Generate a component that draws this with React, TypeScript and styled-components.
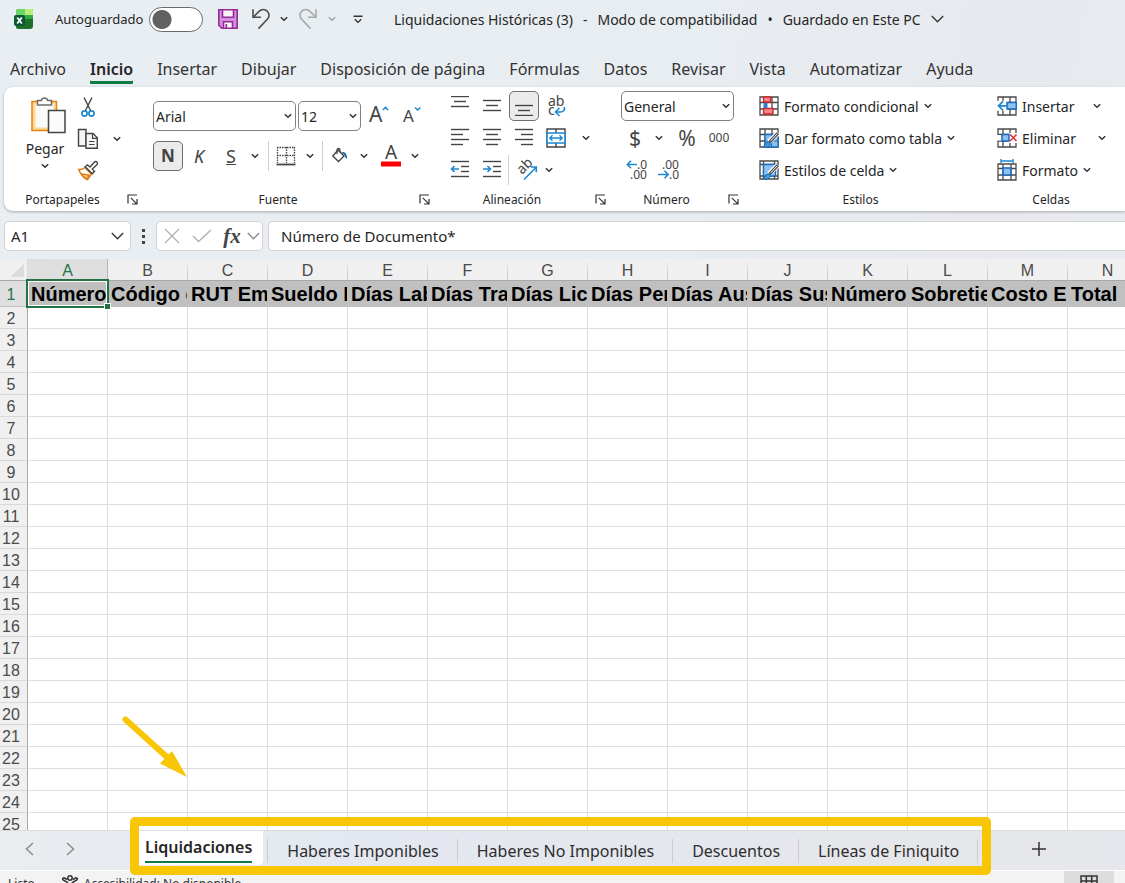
import React from 'react';
import styled, { createGlobalStyle, css } from 'styled-components';

const UI_FONT = '"Noto Sans", "Open Sans", sans-serif';
const CELL_FONT = '"Liberation Sans", Arial, sans-serif';
const INK = '#262626';
const LINE = '#444444';
const BLUE = '#1e88d2';
const GREEN = '#107c41';
const YELLOW = '#f9c606';

const GlobalStyle = createGlobalStyle`
  *, *::before, *::after { box-sizing: border-box; }
  body { margin: 0; font-family: ${UI_FONT}; color: ${INK}; }
  button, input, select { font: inherit; color: inherit; margin: 0; }
  svg { display: block; flex: none; }
`;

/* ---------- shell ---------- */

const Window = styled.div`
  display: flex;
  flex-direction: column;
  height: 100vh;
  overflow: hidden;
  background: linear-gradient(100deg, #e8eef2 0%, #e8edf1 55%, #e7e9ee 80%, #e8ecf1 100%);
`;

const PlainButton = styled.button`
  display: inline-flex;
  align-items: center;
  justify-content: center;
  flex: none;
  padding: 0;
  border: 0;
  background: none;
  white-space: nowrap;
`;

/* ---------- title bar ---------- */

const TitleBar = styled.header`
  display: flex;
  align-items: center;
  flex: none;
  height: 38px;
  padding-left: 13px;
  white-space: nowrap;
`;

const AutoSave = styled.label`
  display: flex;
  align-items: center;
  justify-content: space-between;
  gap: 6px;
  width: 148px;
  margin: 0 11px 0 21px;
  font-size: 13px;
`;

const Switch = styled.input`
  appearance: none;
  flex: none;
  width: 54px;
  height: 25px;
  border: 1px solid #6a6a6a;
  border-radius: 13px;
  background: radial-gradient(circle at 12px 50%, #616161 9px, #ffffff 10px);
`;

const QuickButton = styled(PlainButton)<{ $w: number }>`
  width: ${p => p.$w}px;
  height: 28px;
`;

const DocumentTitle = styled.button`
  display: flex;
  align-items: center;
  gap: 10px;
  margin-left: 14px;
  padding: 0;
  border: 0;
  background: none;
  font-size: 14px;
`;

/* ---------- ribbon tabs ---------- */

const RibbonTabs = styled.nav`
  display: flex;
  flex: none;
  gap: 24px;
  height: 49px;
  padding: 17px 10px 0;
  font-size: 16px;
  line-height: 28px;
`;

const RibbonTab = styled.a<{ $active?: boolean }>`
  height: 29px;
  color: #333333;
  text-decoration: none;
  white-space: nowrap;
  ${p => p.$active && css`
    border-radius: 1px;
    box-shadow: 0 -3px 0 ${GREEN} inset;
    color: ${INK};
    font-weight: 600;
  `}
`;

/* ---------- ribbon ---------- */

const Ribbon = styled.section`
  display: flex;
  flex: none;
  height: 124px;
  margin-left: 4px;
  border-radius: 9px 0 0 9px;
  background: #ffffff;
  box-shadow: 0 1px 3px rgba(0, 0, 0, 0.28);
`;

const Group = styled.div<{ $w?: number }>`
  position: relative;
  display: flex;
  flex-direction: column;
  flex: ${p => (p.$w ? `0 0 ${p.$w}px` : '1 0 0')};
  padding-top: 3px;
  & + &::before {
    content: '';
    position: absolute;
    left: -1px;
    top: 6px;
    bottom: 7px;
    width: 1px;
    background: #cfcfcf;
  }
`;

const GroupBody = styled.div<{ $pad: number; $top?: number; $gap?: number }>`
  display: flex;
  flex-direction: column;
  flex: none;
  height: 97px;
  gap: ${p => p.$gap ?? 0}px;
  padding: ${p => p.$top ?? 0}px 0 0 ${p => p.$pad}px;
`;

const GroupFooter = styled.div`
  display: flex;
  align-items: center;
  height: 24px;
  padding-right: 5px;
  font-size: 12px;
  span { flex: 1; text-align: center; }
`;

const Launcher = styled(PlainButton)`
  width: 17px;
  height: 18px;
  padding-left: 6px;
`;

const Row = styled.div<{ $h?: number; $gap?: number }>`
  display: flex;
  align-items: center;
  flex: none;
  gap: ${p => p.$gap ?? 0}px;
  height: ${p => p.$h ?? 32}px;
`;

const Tool = styled(PlainButton)<{ $w?: number; $on?: boolean; $size?: number }>`
  width: ${p => p.$w ?? 32}px;
  height: 30px;
  font-size: ${p => p.$size ?? 18}px;
  line-height: 28px;
  color: ${LINE};
  ${p => p.$on && css`
    width: 30px;
    border: 1px solid #6f6f6f;
    border-radius: 5px;
    background: #ebebeb;
  `}
`;

const ToggleSlot = styled.div`
  display: flex;
  justify-content: center;
  width: 32px;
`;

const ToolDivider = styled.div<{ $gap?: number }>`
  flex: none;
  width: 1px;
  height: 30px;
  margin-left: ${p => p.$gap ?? 0}px;
  background: #cfcfcf;
`;

const Clipboard = styled.div`
  display: flex;
  height: 97px;
  padding: 1px 0 0 16px;
`;

const PasteButton = styled(PlainButton)`
  flex-direction: column;
  justify-content: flex-start;
  gap: 3px;
  width: 50px;
  padding-top: 4px;
  font-size: 14px;
  line-height: 22px;
  svg:first-child { margin-left: 5px; }
`;

const ClipboardTools = styled.div`
  display: grid;
  grid-template-columns: 36px 22px;
  grid-auto-rows: 32px;
  place-items: center;
`;

const SelectBox = styled.div<{ $w: number }>`
  position: relative;
  flex: none;
  width: ${p => p.$w}px;
  height: 30px;
  select {
    appearance: none;
    width: 100%;
    height: 100%;
    padding: 0 0 0 2px;
    border: 1px solid #808080;
    border-radius: 5px;
    background: #ffffff;
    font-size: 14px;
  }
  svg {
    position: absolute;
    right: 4px;
    top: 12px;
    pointer-events: none;
  }
`;

const CommandButton = styled(PlainButton)<{ $w?: number }>`
  justify-content: flex-start;
  gap: 5px;
  height: 32px;
  min-width: ${p => p.$w ?? 0}px;
  font-size: 14px;
`;

const Push = styled.span`
  margin-left: auto;
`;

/* ---------- formula bar ---------- */

const FormulaRow = styled.div`
  display: flex;
  align-items: center;
  flex: none;
  height: 48px;
  padding: 2px 0 0 4px;
`;

const Field = styled.div<{ $w?: number }>`
  display: flex;
  align-items: center;
  flex: ${p => (p.$w ? `0 0 ${p.$w}px` : '1 1 0')};
  min-width: 0;
  height: 30px;
  border: 1px solid #d2d2d2;
  border-radius: 5px;
  background: #ffffff;
  font-size: 15px;
  input {
    flex: 1;
    min-width: 0;
    padding: 0;
    border: 0;
    outline: 0;
    background: none;
  }
`;

const NameField = styled(Field)`
  padding: 0 6px;
`;

const FormulaField = styled(Field)`
  margin-left: 5px;
  padding-left: 12px;
  border-right: 0;
  border-radius: 5px 0 0 5px;
`;

const Grip = styled.div`
  display: grid;
  gap: 3px;
  width: 25px;
  justify-content: center;
  i { width: 3px; height: 3px; background: #444444; }
`;

const FunctionMark = styled.span`
  font: italic bold 21px/26px "Liberation Serif", serif;
  color: #444444;
`;

/* ---------- sheet ---------- */

const SheetArea = styled.main`
  position: relative;
  flex: 1 1 0;
  min-height: 0;
  overflow: hidden;
  background: #ffffff;
`;

const Sheet = styled.table`
  table-layout: fixed;
  width: 1148px;
  border-collapse: separate;
  border-spacing: 0;
  font-family: ${CELL_FONT};
`;

const Corner = styled.td`
  width: 28px;
  height: 22px;
  padding: 0;
  border-right: 1px solid #dadada;
  border-bottom: 1px solid #a8a8a8;
  background: linear-gradient(135deg, transparent 50%, #dcdcdc 50%) 10px 4px / 14px 14px no-repeat #f0f0f0;
`;

const ColumnHead = styled.th<{ $active?: boolean }>`
  width: 80px;
  height: 22px;
  padding: 2px 1px 0 0;
  border-bottom: 1px solid #a8a8a8;
  background: ${p => p.$active
    ? 'linear-gradient(#b5b5b5, #b5b5b5) right / 1px 100% no-repeat #dfdfdf'
    : 'linear-gradient(#f0f0f0, #c6c6c6) right / 1px 100% no-repeat #f0f0f0'};
  color: ${p => (p.$active ? '#217346' : '#4a4a4a')};
  font-size: 16px;
  font-weight: 400;
  line-height: 19px;
`;

const RowHead = styled.th<{ $active?: boolean }>`
  height: ${p => (p.$active ? 26 : 22)}px;
  padding: 2px 5px 0 0;
  border-right: 1px solid #a8a8a8;
  border-bottom: 1px solid ${p => (p.$active ? '#c0c0c0' : '#d9d9d9')};
  background: ${p => (p.$active ? '#dfdfdf' : '#f0f0f0')};
  color: ${p => (p.$active ? '#217346' : '#4a4a4a')};
  font-size: 16px;
  font-weight: 400;
  line-height: 19px;
  text-align: center;
`;

const Cell = styled.td`
  height: 22px;
  padding: 0;
  border-right: 1px solid #dedede;
  border-bottom: 1px solid #dedede;
`;

const TitleCell = styled.td<{ $selected?: boolean }>`
  position: relative;
  height: 26px;
  padding: 0 1px 0 3px;
  background: #c0c0c0;
  color: #000000;
  font-size: 20px;
  font-weight: 700;
  line-height: 26px;
  white-space: nowrap;
  span { display: block; overflow: hidden; }
  ${p => p.$selected && css`
    z-index: 1;
    &::before {
      content: '';
      position: absolute;
      inset: -2px -1px -1px -2px;
      border: 2px solid #217346;
      box-shadow: inset 0 0 0 1px #ffffff;
    }
    &::after {
      content: '';
      position: absolute;
      right: -3px;
      bottom: -3px;
      width: 7px;
      height: 7px;
      border: 1px solid #ffffff;
      background: #217346;
    }
  `}
`;

const Arrow = styled.svg`
  position: absolute;
  left: 120px;
  bottom: 50px;
`;

/* ---------- sheet tabs and status ---------- */

const TabStrip = styled.nav`
  position: relative;
  z-index: 2;
  display: flex;
  align-items: center;
  flex: none;
  height: 40px;
  border-top: 1px solid #dcdcdc;
  background: linear-gradient(90deg, #e9edf0 0%, #e4e8f0 30%, #e4e7ee 60%, #e6e7ea 80%, #e5e7ec 100%);
`;

const TabArrows = styled.div`
  display: flex;
  width: 139px;
  padding: 0 0 3px 22px;
  gap: 24px;
`;

const TabList = styled.div`
  position: relative;
  display: flex;
  height: 39px;
  padding-right: 4px;
  &::after {
    content: '';
    position: absolute;
    inset: -14px -9px -5px -9px;
    border: 9px solid ${YELLOW};
    border-radius: 5px;
    pointer-events: none;
  }
`;

const SheetTab = styled.a<{ $active?: boolean }>`
  position: relative;
  padding: 6px 19px 0;
  color: #2e2e2e;
  font-size: 16px;
  line-height: 28px;
  text-decoration: none;
  white-space: nowrap;
  &::after {
    content: '';
    position: absolute;
    right: ${p => (p.$active ? -5 : 0)}px;
    top: 8px;
    width: 1px;
    height: 24px;
    background: #cccccc;
  }
  ${p => p.$active && css`
    height: 34px;
    margin-right: 5px;
    padding: 2px 11px 0 6px;
    border-radius: 0 0 5px 0;
    background: #ffffff;
    color: ${INK};
    font-weight: 600;
    span { display: block; border-bottom: 2px solid ${GREEN}; }
  `}
`;

const AddSheet = styled(PlainButton)`
  width: 30px;
  height: 30px;
  margin: 0 0 4px 42px;
`;

const StatusBar = styled.footer`
  display: flex;
  align-items: flex-start;
  flex: none;
  height: 13px;
  padding: 4px 11px 0 8px;
  overflow: hidden;
  border-top: 1px solid #ffffff;
  background: #f3f3f3;
  color: #333333;
  font-size: 12px;
  line-height: 17px;
  svg { margin: 0 5px 0 26px; }
`;

const ViewButton = styled(PlainButton)`
  align-items: flex-start;
  width: 50px;
  height: 24px;
  margin: -4px 0 0 auto;
  padding-top: 4px;
  background: #dddddd;
  svg { margin: 0; }
`;

/* ---------- icons ---------- */

const Chevron = ({ color = '#333333' }: { color?: string }) => (
  <svg width="8" height="6" viewBox="0 0 8 6" fill="none" stroke={color} strokeWidth="1.5">
    <path d="M0.8 1.2 4 4.3 7.2 1.2" />
  </svg>
);

const WideChevron = ({ color = '#333333' }: { color?: string }) => (
  <svg width="13" height="8" viewBox="0 0 13 8" fill="none" stroke={color} strokeWidth="1.3">
    <path d="M0.8 1 6.5 6.8 12.2 1" />
  </svg>
);

const ExcelLogo = () => (
  <svg width="21" height="22" viewBox="0 0 21 22">
    <path d="M3 4a3 3 0 0 1 3-3h13a1 1 0 0 1 1 1v16a3 3 0 0 1-3 3H5a2 2 0 0 1-2-2z" fill="#1f6f2c" />
    <path d="M3 4a3 3 0 0 1 3-3h6v6H3z" fill="#6bd667" />
    <path d="M12 1h7a1 1 0 0 1 1 1v5h-8z" fill="#b9ec78" />
    <path d="M12 7h8v4h-8z" fill="#33a93f" />
    <path d="M3 7h9v6H3z" fill="#48bd50" />
    <rect x="1" y="7" width="11" height="11" rx="2" fill="#0c5a35" />
    <path d="m4.2 9.5 4.6 6M8.8 9.5l-4.6 6" stroke="#fff" strokeWidth="1.8" />
  </svg>
);

const SaveIcon = () => (
  <svg width="22" height="22" viewBox="0 0 22 22" stroke="#952b9c" strokeWidth="1.6">
    <path d="M1.8 1.8h18.4v18.4H4.8l-3-3z" fill="#d590dc" />
    <path d="M5.5 1.8h11v7.5h-11z" fill="#f8f3f9" />
    <path d="M6.5 20.2v-6.5h9v6.5z" fill="#f8f3f9" />
    <path d="M9.3 16v4" />
  </svg>
);

const UndoIcon = ({ flip = false }: { flip?: boolean }) => (
  <svg width="20" height="22" viewBox="0 0 20 22" fill="none" stroke={flip ? '#a5a9ac' : '#4d4d4d'} strokeWidth="1.6">
    <path
      transform={flip ? 'matrix(-1 0 0 1 20 0)' : undefined}
      d="M2 1.3v7.9h8M2.3 9 8 3.4c2.5-2.4 6-2.4 8.3-.2 2.3 2.3 2.3 5.8 0 8.100L7.5 20.6"
    />
  </svg>
);

const CustomizeIcon = () => (
  <svg width="10" height="9" viewBox="0 0 10 9" fill="none" stroke="#333" strokeWidth="1.4">
    <path d="M0.5 1.2h9M1.800 4.300 5 7.400l3.200-3.100" />
  </svg>
);

const LauncherIcon = () => (
  <svg width="11" height="11" viewBox="0 0 11 11" fill="none" stroke="#333" strokeWidth="1.200">
    <path d="M1 9.500V1h9M3.800 3.800l6 6M10 5v5H5" />
  </svg>
);

const PasteIcon = () => (
  <svg width="38" height="40" viewBox="0 0 38 40">
    <path d="M3 6.500h24.500V35.500H3z" fill="#fdd992" stroke="#e8811a" strokeWidth="1.500" />
    <path d="M6.500 9h18v23.500h-18z" fill="#fafafa" />
    <path d="M8.500 10V5.500h3.800a3.300 3.300 0 0 1 6.400 0h3.800V10z" fill="#fff" stroke="#6c6c6c" strokeWidth="1.500" />
    <path d="M19.500 15.500H36v22H19.500z" fill="#fafafa" stroke="#444" strokeWidth="1.500" />
  </svg>
);

const CutIcon = () => (
  <svg width="20" height="22" viewBox="0 0 20 22" fill="none" strokeWidth="1.400">
    <path d="M6 1.500l6.800 13.500M14 1.500 7.200 15" stroke="#444" />
    <circle cx="6.500" cy="17.500" r="2.600" stroke={BLUE} strokeWidth="1.700" />
    <circle cx="13.500" cy="17.500" r="2.600" stroke={BLUE} strokeWidth="1.700" />
  </svg>
);

const CopyIcon = () => (
  <svg width="22" height="22" viewBox="0 0 22 22" fill="#f6f6f6" stroke="#444" strokeWidth="1.400">
    <path d="M1.500 1.500h7.500V18H1.500z" />
    <path d="M9 5.500h7l4.300 4.300V20.300H9z" />
    <path d="M15.500 5.500v4.800h4.800M12 13.500h5.500M12 16.500h5.500" fill="none" strokeWidth="1.200" />
  </svg>
);

const PainterIcon = () => (
  <svg width="22" height="22" viewBox="0 0 22 22">
    <path d="M1.800 9.500c2.400.3 4.400-.4 6-2l6.600 6.600L10.500 19.500C6.500 18 3.500 14.500 1.800 9.500z" fill="#fff" stroke="#e07b16" strokeWidth="1.500" />
    <path d="m4.500 14 7.500 1-2 4c-2.300-1.300-4-2.800-5.500-5z" fill="#fbd08b" stroke="#e07b16" strokeWidth="1.300" />
    <path d="m8.200 6.700 2.300-1.900 2.500 2.200 4.300-4.800a1.800 1.800 0 0 1 2.600 2.600L15.300 9l2.200 2.500-2.300 2.200z" fill="#fff" stroke="#444" strokeWidth="1.400" />
  </svg>
);

const FontSizeIcon = ({ down = false }: { down?: boolean }) => (
  <svg width="22" height="24" viewBox="0 0 22 24">
    <text x={down ? 2 : 1} y="18" fontFamily="Noto Sans" fontSize={down ? 17 : 21} fill={LINE}>A</text>
    <path d={down ? 'm14 3.500 2.700 2.500 2.700-2.500' : 'm14.800 6 2.700-2.600 2.700 2.600'} fill="none" stroke={BLUE} strokeWidth="1.600" />
  </svg>
);

const BorderIcon = () => (
  <svg width="20" height="20" viewBox="0 0 20 20" fill="none" stroke="#444">
    <path d="M1 1.500h18M1 9.500h18M1.500 1v16M10.500 1v16M18.500 1v16" strokeWidth="1.300" strokeDasharray="1.500 1" />
    <path d="M0.500 18.500h19" strokeWidth="1.800" />
  </svg>
);

const BucketIcon = () => (
  <svg width="18" height="18" viewBox="0 0 18 18">
    <path d="m7 3 6 6-5.500 5.500L1.800 9z" fill="#fff" stroke="#444" strokeWidth="1.400" />
    <path d="M6 7V3.300C6 .9 9 .9 9 3.300v2" fill="none" stroke="#444" strokeWidth="1.300" />
    <path d="M10.500 5c4-.5 5.500 1.500 5.500 7-1.500-1-2-2-2.500-4z" fill="#1769b0" />
  </svg>
);

const FontColorIcon = () => (
  <svg width="20" height="22" viewBox="0 0 20 22">
    <text x="4" y="14" fontFamily="Noto Sans" fontSize="19" fill={LINE}>A</text>
    <path d="M0 16.500h20v5H0z" fill="#fe0000" />
  </svg>
);

const LinesIcon = ({ lines, children }: { lines: number[][]; children?: React.ReactNode }) => (
  <svg width="20" height="20" viewBox="0 0 20 20" fill="none" stroke={LINE} strokeWidth="1.400">
    {lines.map(([x1, x2, y]) => <path key={y} d={`M${x1} ${y}.500H${x2}`} />)}
    {children}
  </svg>
);

const WrapIcon = () => (
  <svg width="20" height="22" viewBox="0 0 20 22">
    <text x="2" y="11" fontFamily="Noto Sans" fontSize="14" fill={LINE}>ab</text>
    <text x="2" y="20" fontFamily="Noto Sans" fontSize="14" fill={LINE}>c</text>
    <path d="M18.500 12c.5 3.500-1.500 5-4 5H10.500M13.500 13l-4 4 4 4" fill="none" stroke={BLUE} strokeWidth="1.600" />
  </svg>
);

const MergeIcon = () => (
  <svg width="20" height="20" viewBox="0 0 20 20" fill="none">
    <path d="M1 1h18v18H1zM10 1v18" stroke="#444" strokeWidth="1.400" />
    <path d="M1 5h18v10H1z" fill="#fff" stroke={BLUE} strokeWidth="1.600" />
    <path d="M4 10h12M6.500 7.300 3.800 10l2.700 2.700M13.500 7.300l2.700 2.700-2.700 2.700" stroke={BLUE} strokeWidth="1.400" />
  </svg>
);

const OrientationIcon = () => (
  <svg width="22" height="22" viewBox="0 0 22 22">
    <text x="6" y="16" fontFamily="Noto Sans" fontSize="14" fill={LINE} transform="rotate(-45 6 16)">ab</text>
    <path d="M8 20.500 20 8.500M15 8h5.300v5.300" fill="none" stroke={BLUE} strokeWidth="1.600" />
  </svg>
);

const DecimalIcon = ({ less = false }: { less?: boolean }) => (
  <svg width="22" height="22" viewBox="0 0 22 22">
    <text x={less ? 4 : 11} y="10" fontFamily="Noto Sans" fontSize="12" fill={LINE}>{less ? '.00' : '.0'}</text>
    <text x={less ? 11 : 4} y="20" fontFamily="Noto Sans" fontSize="12" fill={LINE}>{less ? '.0' : '.00'}</text>
    <path
      d={less ? 'M0 15.500h10M6.500 11.800l3.700 3.700-3.700 3.700' : 'M11 5.500H1.500M5 1.800 1.300 5.500 5 9.200'}
      fill="none" stroke={BLUE} strokeWidth="1.600"
    />
  </svg>
);

const GridBase = () => (
  <path d="M1 1h18v18H1zM1 6.500h18M1 13h18M6 1v18M13 1v18" fill="#fff" stroke="#4a4a4a" strokeWidth="1.300" />
);

const ConditionalIcon = () => (
  <svg width="20" height="20" viewBox="0 0 20 20">
    <GridBase />
    <path d="M4.500 1h7v5h-7zM4.500 12.500H14V18H4.500z" fill="#f58a8e" stroke="#d8242b" strokeWidth="1.400" />
    <path d="M4.500 7h4v5h-4z" fill="#2b7cd0" />
  </svg>
);

const BrushOverlay = () => (
  <>
    <path d="M19 5 10 14" stroke="#fff" strokeWidth="5" />
    <path d="m18.800 5.200-8.300 9" stroke="#444" strokeWidth="3" />
    <path d="m18.300 5.700-7 7.600" stroke="#fff" strokeWidth="1" />
    <path d="M4 18.500c2.500-.3 2-4.800 5.500-4.500 2.500.5 2 3 .5 4.200-1.500 1.200-4 1.300-6 .3z" fill="#3f9ae0" stroke="#1769b0" />
  </>
);

const TableStyleIcon = () => (
  <svg width="20" height="20" viewBox="0 0 20 20">
    <GridBase />
    <path d="M6 6.500h13V19H6z" fill="#8cc2f0" stroke="#1b6fbe" strokeWidth="1.400" />
    <path d="M6 13h13M12.500 6.500V19" stroke="#1b6fbe" strokeWidth="1.200" />
    <BrushOverlay />
  </svg>
);

const CellStyleIcon = () => (
  <svg width="20" height="20" viewBox="0 0 20 20">
    <path d="M1 1h18v18H1zM1 4.500h18M4.500 1v18M15.500 1v18M1 16h18" fill="#fff" stroke="#4a4a4a" strokeWidth="1.300" />
    <path d="M4.500 4.500h12V16h-12z" fill="#8cc2f0" stroke="#1b6fbe" strokeWidth="1.400" />
    <BrushOverlay />
  </svg>
);

const InsertCellsIcon = () => (
  <svg width="20" height="20" viewBox="0 0 20 20">
    <GridBase />
    <path d="M0 4.800h11v10H0z" fill="#fff" />
    <path d="M10 6.500h9.300V13H10z" fill="#8cc2f0" stroke="#1b6fbe" strokeWidth="1.500" />
    <path d="M10 9.800H1.500M6 5.300 1.500 9.800 6 14.300" fill="none" stroke={BLUE} strokeWidth="1.700" />
  </svg>
);

const DeleteCellsIcon = () => (
  <svg width="20" height="20" viewBox="0 0 20 20">
    <GridBase />
    <path d="M0 7h5v5.500H0zM12 5h8v10h-8z" fill="#fff" />
    <path d="M5 6.500h7V13H5z" fill="#8cc2f0" stroke="#1b6fbe" strokeWidth="1.500" />
    <path d="m13 6.500 6.500 6.500M19.500 6.500 13 13" stroke="#e0343a" strokeWidth="1.600" />
  </svg>
);

const FormatCellsIcon = () => (
  <svg width="20" height="22" viewBox="0 0 20 22">
    <path d="M1 5h18v16H1zM1 9.500h18M1 16h18M6 5v16M14 5v16" fill="#fff" stroke="#4a4a4a" strokeWidth="1.300" />
    <path d="M6 9h8v7H6z" fill="#8cc2f0" stroke="#1b6fbe" strokeWidth="1.500" />
    <path d="M4 2h12M4 0v4.300M16 0v4.300" stroke={BLUE} strokeWidth="1.400" />
  </svg>
);

const AccessibilityIcon = () => (
  <svg width="18" height="20" viewBox="0 0 18 20" fill="none" stroke="#333" strokeWidth="1.500">
    <circle cx="9" cy="3" r="2.200" />
    <path d="M6 4.500 3.500 3C1.500 2.300 1 4.500 2.500 5.200L6.500 7.500v4L4.500 17M12 4.500 14.500 3c2-.7 2.500 1.500 1 2.200l-4 2.300v4l2 5.500" />
  </svg>
);

const GridViewIcon = () => (
  <svg width="18" height="18" viewBox="0 0 18 18" fill="none" stroke="#333" strokeWidth="1.500">
    <path d="M1 1h16v16H1zM1 6h16M1 11h16M6.300 1v16M11.700 1v16" />
  </svg>
);

/* ---------- data ---------- */

const ribbonTabs = [
  'Archivo', 'Inicio', 'Insertar', 'Dibujar', 'Disposición de página', 'Fórmulas',
  'Datos', 'Revisar', 'Vista', 'Automatizar', 'Ayuda',
];

const columns: [string, string][] = [
  ['A', 'Número'], ['B', 'Código de'], ['C', 'RUT Em'], ['D', 'Sueldo B'], ['E', 'Días Lab'],
  ['F', 'Días Tra'], ['G', 'Días Lic'], ['H', 'Días Per'], ['I', 'Días Aus'], ['J', 'Días Sus'],
  ['K', 'Número'], ['L', 'Sobretie'], ['M', 'Costo E'], ['N', 'Total'],
];

const rowNumbers = Array.from({ length: 24 }, (_, i) => i + 2);

const sheetTabs = ['Liquidaciones', 'Haberes Imponibles', 'Haberes No Imponibles', 'Descuentos', 'Líneas de Finiquito'];

/* ---------- parts ---------- */

const Footer = ({ label, launcher = true }: { label: string; launcher?: boolean }) => (
  <GroupFooter>
    <span>{label}</span>
    {launcher && <Launcher aria-label={`Opciones de ${label}`}><LauncherIcon /></Launcher>}
  </GroupFooter>
);

const Picker = ({ w, value, label }: { w: number; value: string; label: string }) => (
  <SelectBox $w={w}>
    <select aria-label={label} defaultValue={value}><option>{value}</option></select>
    <Chevron />
  </SelectBox>
);

const More = ({ w, label }: { w: number; label: string }) => (
  <Tool $w={w} aria-label={label}><Chevron /></Tool>
);

export default function App() {
  return (
    <>
      <GlobalStyle />
      <Window>
        <TitleBar>
          <ExcelLogo />
          <AutoSave>
            Autoguardado
            <Switch type="checkbox" role="switch" />
          </AutoSave>
          <QuickButton $w={28} aria-label="Guardar"><SaveIcon /></QuickButton>
          <QuickButton $w={38} aria-label="Deshacer"><UndoIcon /></QuickButton>
          <QuickButton $w={8} aria-label="Más deshacer"><Chevron /></QuickButton>
          <QuickButton $w={40} aria-label="Rehacer"><UndoIcon flip /></QuickButton>
          <QuickButton $w={8} aria-label="Más rehacer"><Chevron color="#a0a4a7" /></QuickButton>
          <QuickButton $w={44} aria-label="Personalizar"><CustomizeIcon /></QuickButton>
          <DocumentTitle>
            <span>Liquidaciones Históricas (3)</span>
            <span>-</span>
            <span>Modo de compatibilidad</span>
            <span>•</span>
            <span>Guardado en Este PC</span>
            <WideChevron />
          </DocumentTitle>
        </TitleBar>

        <RibbonTabs>
          {ribbonTabs.map(tab => (
            <RibbonTab key={tab} href="#" $active={tab === 'Inicio'}>{tab}</RibbonTab>
          ))}
        </RibbonTabs>

        <Ribbon>
          <Group $w={139}>
            <Clipboard>
              <PasteButton>
                <PasteIcon />
                <span>Pegar</span>
                <Chevron />
              </PasteButton>
              <ClipboardTools>
                <Tool aria-label="Cortar"><CutIcon /></Tool>
                <span />
                <Tool aria-label="Copiar"><CopyIcon /></Tool>
                <More w={16} label="Más copiar" />
                <Tool aria-label="Copiar formato"><PainterIcon /></Tool>
              </ClipboardTools>
            </Clipboard>
            <Footer label="Portapapeles" />
          </Group>

          <Group $w={292}>
            <GroupBody $pad={10} $top={11} $gap={10}>
              <Row $h={30} $gap={2}>
                <Picker w={143} value="Arial" label="Fuente" />
                <Picker w={63} value="12" label="Tamaño" />
                <Tool $w={32} aria-label="Aumentar tamaño"><FontSizeIcon /></Tool>
                <Tool $w={30} aria-label="Reducir tamaño"><FontSizeIcon down /></Tool>
              </Row>
              <Row $h={30}>
                <Tool $on $size={17}><b>N</b></Tool>
                <Tool><i>K</i></Tool>
                <Tool><u>S</u></Tool>
                <More w={16} label="Más subrayado" />
                <ToolDivider $gap={5} />
                <Tool $w={34} aria-label="Bordes"><BorderIcon /></Tool>
                <More w={14} label="Más bordes" />
                <ToolDivider $gap={5} />
                <Tool $w={34} aria-label="Color de relleno"><BucketIcon /></Tool>
                <More w={14} label="Más relleno" />
                <Tool $w={40} aria-label="Color de fuente"><FontColorIcon /></Tool>
                <More w={8} label="Más color" />
              </Row>
            </GroupBody>
            <Footer label="Fuente" />
          </Group>

          <Group $w={176}>
            <GroupBody $pad={9}>
              <Row>
                <Tool aria-label="Alinear arriba"><LinesIcon lines={[[1, 19, 0], [4, 16, 5], [1, 19, 10]]} /></Tool>
                <Tool aria-label="Alinear en medio"><LinesIcon lines={[[1, 19, 4], [4, 16, 9], [1, 19, 14]]} /></Tool>
                <ToggleSlot>
                  <Tool $on aria-label="Alinear abajo"><LinesIcon lines={[[1, 19, 9], [4, 16, 14], [1, 19, 19]]} /></Tool>
                </ToggleSlot>
                <Tool aria-label="Ajustar texto"><WrapIcon /></Tool>
              </Row>
              <Row>
                <Tool aria-label="Izquierda"><LinesIcon lines={[[1, 19, 1], [1, 13, 6], [1, 19, 11], [1, 13, 16]]} /></Tool>
                <Tool aria-label="Centrar"><LinesIcon lines={[[1, 19, 1], [4, 16, 6], [1, 19, 11], [4, 16, 16]]} /></Tool>
                <Tool aria-label="Derecha"><LinesIcon lines={[[1, 19, 1], [7, 19, 6], [1, 19, 11], [7, 19, 16]]} /></Tool>
                <Tool aria-label="Combinar"><MergeIcon /></Tool>
                <More w={28} label="Más combinar" />
              </Row>
              <Row>
                <Tool aria-label="Disminuir sangría">
                  <LinesIcon lines={[[1, 19, 1], [11, 19, 6], [11, 19, 11], [1, 19, 16]]}>
                    <path d="M9 9H1.500M4.500 6l-3 3 3 3" stroke={BLUE} strokeWidth="1.600" />
                  </LinesIcon>
                </Tool>
                <Tool aria-label="Aumentar sangría">
                  <LinesIcon lines={[[1, 19, 1], [11, 19, 6], [11, 19, 11], [1, 19, 16]]}>
                    <path d="M1 9h7.500M5.500 6l3 3-3 3" stroke={BLUE} strokeWidth="1.600" />
                  </LinesIcon>
                </Tool>
                <ToolDivider />
                <Tool $w={36} aria-label="Orientación"><OrientationIcon /></Tool>
                <More w={8} label="Más orientación" />
              </Row>
            </GroupBody>
            <Footer label="Alineación" />
          </Group>

          <Group $w={133}>
            <GroupBody $pad={10}>
              <Row><Picker w={113} value="General" label="Formato de número" /></Row>
              <Row>
                <Tool $w={28} $size={21}>$</Tool>
                <More w={20} label="Más moneda" />
                <Tool $w={36} $size={21}>%</Tool>
                <Tool $w={28} $size={12}>000</Tool>
              </Row>
              <Row>
                <Tool aria-label="Aumentar decimales"><DecimalIcon /></Tool>
                <Tool aria-label="Disminuir decimales"><DecimalIcon less /></Tool>
              </Row>
            </GroupBody>
            <Footer label="Número" />
          </Group>

          <Group $w={238}>
            <GroupBody $pad={15}>
              <CommandButton><ConditionalIcon />Formato condicional<Chevron /></CommandButton>
              <CommandButton><TableStyleIcon />Dar formato como tabla<Chevron /></CommandButton>
              <CommandButton><CellStyleIcon />Estilos de celda<Chevron /></CommandButton>
            </GroupBody>
            <Footer label="Estilos" launcher={false} />
          </Group>

          <Group>
            <GroupBody $pad={15}>
              <Row><CommandButton $w={104}><InsertCellsIcon />Insertar<Push><Chevron /></Push></CommandButton></Row>
              <Row><CommandButton $w={109}><DeleteCellsIcon />Eliminar<Push><Chevron /></Push></CommandButton></Row>
              <Row><CommandButton><FormatCellsIcon />Formato<Chevron /></CommandButton></Row>
            </GroupBody>
            <Footer label="Celdas" launcher={false} />
          </Group>
        </Ribbon>

        <FormulaRow>
          <NameField $w={127}>
            <input aria-label="Cuadro de nombres" defaultValue="A1" />
            <PlainButton aria-label="Lista de nombres"><WideChevron /></PlainButton>
          </NameField>
          <Grip><i /><i /><i /></Grip>
          <Field $w={107}>
            <Tool $w={30} aria-label="Cancelar">
              <svg width="16" height="16" viewBox="0 0 16 16" stroke="#b0b0b0" strokeWidth="1.400"><path d="m1 1 14 14M15 1 1 15" /></svg>
            </Tool>
            <Tool $w={30} aria-label="Introducir">
              <svg width="20" height="14" viewBox="0 0 20 14" fill="none" stroke="#b0b0b0" strokeWidth="1.400"><path d="m1 7 5.500 5.500L19 1" /></svg>
            </Tool>
            <Tool $w={30} aria-label="Insertar función"><FunctionMark>fx</FunctionMark></Tool>
            <WideChevron color="#8a8a8a" />
          </Field>
          <FormulaField>
            <input aria-label="Barra de fórmulas" defaultValue="Número de Documento*" />
          </FormulaField>
        </FormulaRow>

        <SheetArea>
          <Sheet>
            <thead>
              <tr>
                <Corner />
                {columns.map(([letter]) => (
                  <ColumnHead key={letter} scope="col" $active={letter === 'A'}>{letter}</ColumnHead>
                ))}
              </tr>
            </thead>
            <tbody>
              <tr>
                <RowHead scope="row" $active>1</RowHead>
                {columns.map(([letter, title]) => (
                  <TitleCell key={letter} $selected={letter === 'A'}><span>{title}</span></TitleCell>
                ))}
              </tr>
              {rowNumbers.map(n => (
                <tr key={n}>
                  <RowHead scope="row">{n}</RowHead>
                  {columns.map(([letter]) => <Cell key={letter} />)}
                </tr>
              ))}
            </tbody>
          </Sheet>
          <Arrow width="70" height="66" viewBox="0 0 70 66">
            <path d="M5.500 5.500 48 44" stroke={YELLOW} strokeWidth="6" strokeLinecap="round" />
            <path d="M67 63 40 49.500 52 37z" fill={YELLOW} />
          </Arrow>
        </SheetArea>

        <TabStrip>
          <TabArrows>
            <PlainButton aria-label="Hoja anterior">
              <svg width="16" height="14" viewBox="0 0 16 14" fill="none" stroke="#8c8c8c" strokeWidth="1.500"><path d="M11 1 4.500 7l6.500 6" /></svg>
            </PlainButton>
            <PlainButton aria-label="Hoja siguiente">
              <svg width="16" height="14" viewBox="0 0 16 14" fill="none" stroke="#8c8c8c" strokeWidth="1.500"><path d="m5 1 6.500 6L5 13" /></svg>
            </PlainButton>
          </TabArrows>
          <TabList>
            {sheetTabs.map((tab, i) => (
              <SheetTab key={tab} href="#" $active={i === 0}><span>{tab}</span></SheetTab>
            ))}
          </TabList>
          <AddSheet aria-label="Hoja nueva">
            <svg width="14" height="14" viewBox="0 0 14 14" stroke="#333" strokeWidth="1.500"><path d="M7 0v14M0 7h14" /></svg>
          </AddSheet>
        </TabStrip>

        <StatusBar>
          <span>Listo</span>
          <AccessibilityIcon />
          <span>Accesibilidad: No disponible</span>
          <ViewButton aria-label="Vista normal"><GridViewIcon /></ViewButton>
        </StatusBar>
      </Window>
    </>
  );
}
